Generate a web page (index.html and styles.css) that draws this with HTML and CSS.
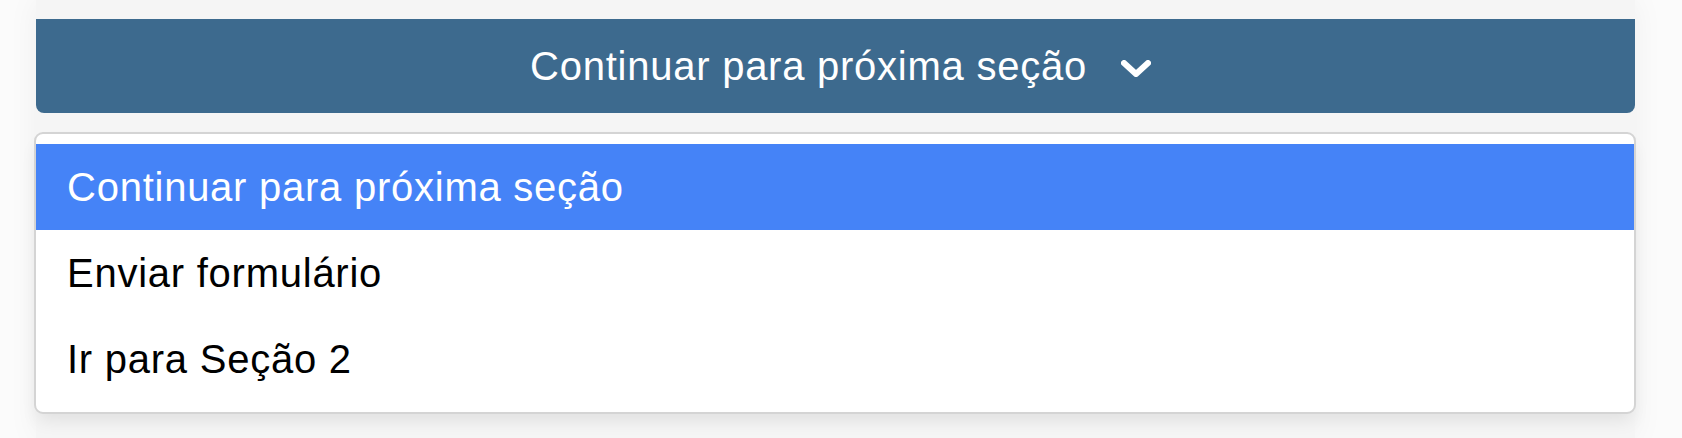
FILE: index.html
```
<!DOCTYPE html>
<html lang="pt-BR">
<head>
<meta charset="utf-8">
<title>Seção</title>
<link rel="stylesheet" href="styles.css">
</head>
<body>
<div class="card">
  <button class="select-btn" type="button">
    <span class="select-label">Continuar para próxima seção</span>
    <svg class="chevron" width="30" height="17" viewBox="0 0 30 17" aria-hidden="true">
      <polyline points="3,3 15,14 27,3" fill="none" stroke="#ffffff" stroke-width="6" stroke-linecap="round" stroke-linejoin="round"/>
    </svg>
  </button>
  <ul class="menu">
    <li class="menu-item is-active">Continuar para próxima seção</li>
    <li class="menu-item">Enviar formulário</li>
    <li class="menu-item">Ir para Seção 2</li>
  </ul>
</div>
</body>
</html>
```
FILE: styles.css
```
html, body {
  margin: 0;
  padding: 0;
}
body {
  background: #fbfbfb;
  width: 1682px;
  height: 438px;
  overflow: hidden;
  font-family: "Liberation Sans", Arial, Helvetica, sans-serif;
}
.card {
  margin-left: 36px;
  width: 1599px;
  height: 438px;
  background: #f5f5f5;
  box-shadow: 0 0 30px rgba(0, 0, 0, 0.05);
  padding-top: 19px;
  box-sizing: border-box;
  display: flex;
  flex-direction: column;
}
.select-btn {
  height: 94px;
  width: 100%;
  border: 0;
  margin: 0;
  padding: 0 0 0 10px;
  background: #3d6a8e;
  border-radius: 0 0 8px 8px;
  color: #ffffff;
  display: flex;
  align-items: center;
  justify-content: center;
  gap: 34px;
  font-family: inherit;
  font-size: 40px;
  letter-spacing: 0.75px;
  line-height: 94px;
  cursor: pointer;
}
.chevron {
  display: block;
  margin-top: 5px;
}
.menu {
  list-style: none;
  margin: 19px -1px 0 -2px;
  padding: 10px 0;
  background: #ffffff;
  border: 2px solid #d4d4d4;
  border-radius: 9px;
  box-shadow: 0 10px 18px -4px rgba(0, 0, 0, 0.09);
}
.menu-item {
  height: 86px;
  line-height: 86px;
  padding-left: 31px;
  font-size: 40px;
  letter-spacing: 0.75px;
  color: #000000;
}
.menu-item.is-active {
  background: #4583f7;
  color: #ffffff;
}
```
